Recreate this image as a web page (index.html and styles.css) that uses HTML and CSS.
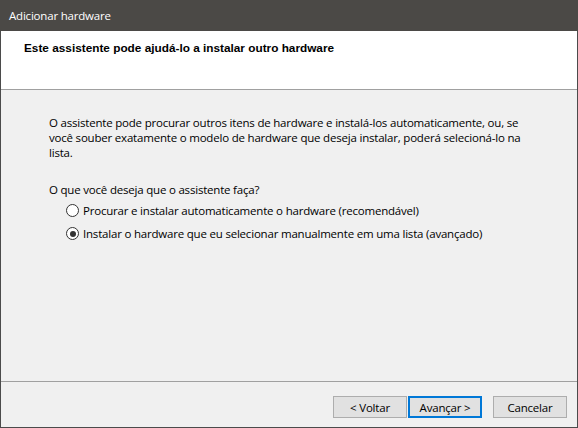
FILE: index.html
```html
<!DOCTYPE html>
<html lang="pt-BR">
<head>
<meta charset="utf-8">
<title>Adicionar hardware</title>
<link rel="stylesheet" href="styles.css">
</head>
<body>
<div class="window">
  <div class="titlebar">Adicionar hardware</div>
  <div class="header">
    <div class="header-title">Este assistente pode ajudá-lo a instalar outro hardware</div>
  </div>
  <div class="content">
    <p class="intro">O assistente pode procurar outros itens de hardware e instalá-los automaticamente, ou, se<br>você souber exatamente o modelo de hardware que deseja instalar, poderá selecioná-lo na<br>lista.</p>
    <p class="question">O que você deseja que o assistente faça?</p>
    <div class="options">
      <label class="option"><span class="radio"></span><span>Procurar e instalar automaticamente o hardware (recomendável)</span></label>
      <label class="option"><span class="radio checked"></span><span>Instalar o hardware que eu selecionar manualmente em uma lista (avançado)</span></label>
    </div>
  </div>
  <div class="footer">
    <button class="btn">&lt; Voltar</button>
    <button class="btn default">Avançar &gt;</button>
    <button class="btn cancel">Cancelar</button>
  </div>
</div>
</body>
</html>
```
FILE: styles.css
```css
html, body {
  margin: 0;
  padding: 0;
  background: #f0f0f0;
}
.window {
  width: 578px;
  height: 428px;
  box-sizing: border-box;
  border: 1px solid #4b4b4b;
  border-top: 0;
  display: flex;
  flex-direction: column;
  background: #f0f0f0;
  font-family: "Open Sans", "Noto Sans", sans-serif;
  font-size: 11.5px;
  letter-spacing: -0.2px;
  color: #000;
}
.titlebar {
  height: 31px;
  margin: 0 -1px;
  background: #4b4946;
  color: #fff;
  padding-left: 9px;
  line-height: 31px;
  flex: none;
}
.header {
  height: 58px;
  background: #fff;
  border-bottom: 1px solid #a0a0a0;
  flex: none;
}
.header-title {
  padding: 10px 0 0 23px;
  font-family: "Liberation Sans", Arial, sans-serif;
  font-weight: bold;
  font-size: 11.8px;
  letter-spacing: 0;
  line-height: 15px;
}
.content {
  flex: 1;
  padding: 25px 0 0 48px;
  line-height: 15px;
}
.intro, .question {
  margin: 0;
}
.question {
  margin-top: 22px;
}
.options {
  display: flex;
  flex-direction: column;
  gap: 8px;
  margin-top: 6px;
  padding-left: 17px;
}
.option {
  display: flex;
  align-items: center;
  gap: 4px;
  height: 15px;
}
.radio {
  width: 11px;
  height: 11px;
  border: 1px solid #333;
  border-radius: 50%;
  background: #fff;
  position: relative;
  flex: none;
}
.radio.checked::after {
  content: "";
  position: absolute;
  left: 2.5px;
  top: 2.5px;
  width: 6px;
  height: 6px;
  border-radius: 50%;
  background: #333;
}
.footer {
  flex: none;
  height: 46px;
  box-sizing: border-box;
  border-top: 1px solid #a0a0a0;
  display: flex;
  justify-content: flex-end;
  align-items: flex-start;
  padding: 14px 10px 0 0;
}
.btn {
  width: 74px;
  height: 22px;
  box-sizing: border-box;
  border: 1px solid #adadad;
  background: #e1e1e1;
  font-family: "Open Sans", "Noto Sans", sans-serif;
  font-size: 11.5px;
  letter-spacing: -0.2px;
  color: #000;
  padding: 0;
  margin: 0;
}
.btn.default {
  border: 2px solid #0078d7;
  margin-left: 1px;
}
.btn.cancel {
  margin-left: 11px;
}
```
